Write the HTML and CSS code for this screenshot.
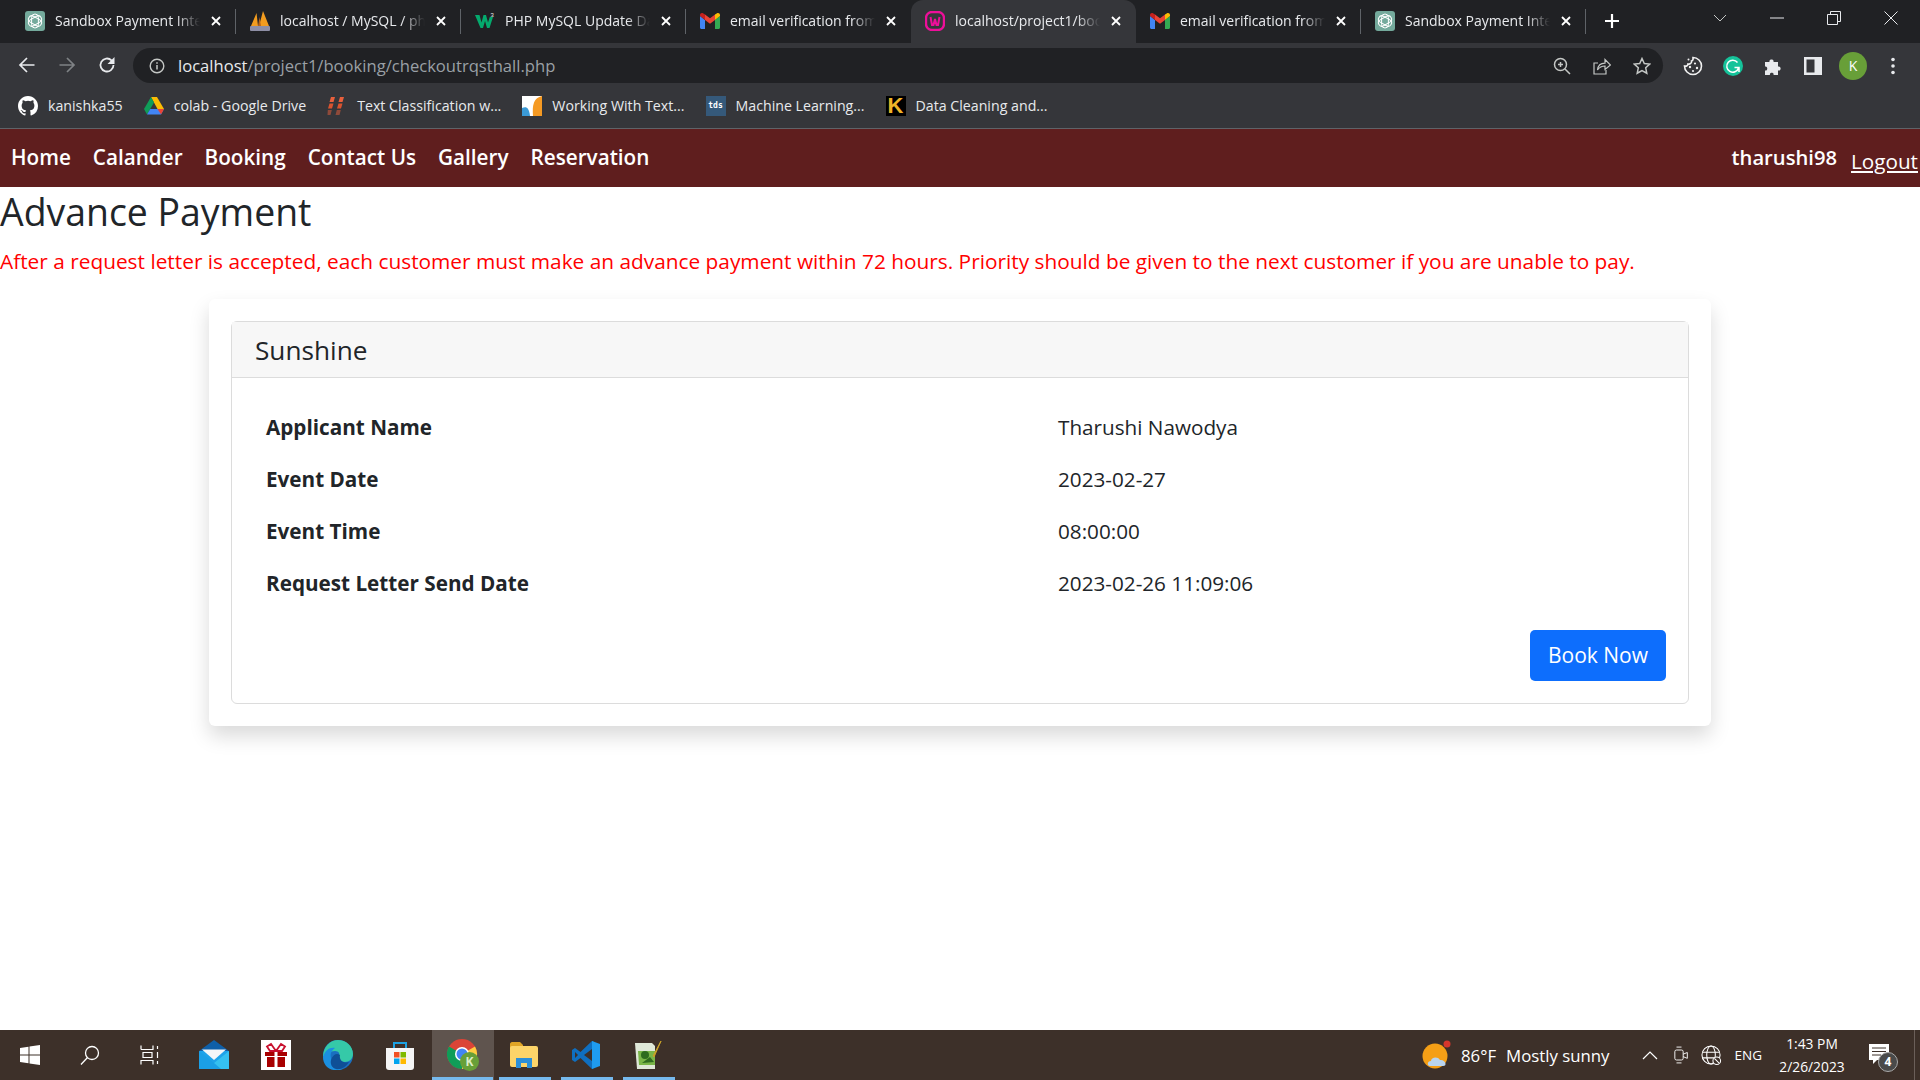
FILE: index.html
```html
<!DOCTYPE html>
<html lang="en">
<head>
  <meta charset="UTF-8">
  <title>Advance Payment</title>
  <link rel="stylesheet" href="styles.css">
</head>
<body>
  <svg class="icon-defs">
    <symbol id="ic-openai" viewBox="0 0 20 20">
      <rect width="20" height="20" rx="3" fill="#74aa9c"/>
      <g fill="none" stroke="#fff" stroke-width="1">
        <rect x="6.6" y="3" width="6.8" height="14" rx="3.4"/>
        <rect x="6.6" y="3" width="6.8" height="14" rx="3.4" transform="rotate(60 10 10)"/>
        <rect x="6.6" y="3" width="6.8" height="14" rx="3.4" transform="rotate(120 10 10)"/>
      </g>
    </symbol>
    <symbol id="ic-gmail" viewBox="0 0 20 16">
      <path d="M0 3v11.500C0 15.300.7 16 1.500 16H5V7z" fill="#4285f4"/>
      <path d="M15 7v9h3.500c.8 0 1.500-.7 1.500-1.500V3z" fill="#34a853"/>
      <path d="M5 7 10 10.800 15 7V1.500L10 5.200 5 1.500z" fill="#ea4335"/>
      <path d="M0 3 5 7V1.500L3 .3C1.600-.5 0 .5 0 2z" fill="#c5221f"/>
      <path d="M20 3 15 7V1.500l2-1.200C18.400-.5 20 .5 20 2z" fill="#fbbc04"/>
    </symbol>
    <symbol id="ic-close" viewBox="0 0 12 12">
      <path d="M2 2l8 8M10 2l-8 8" stroke="#fff" stroke-width="1.800" fill="none"/>
    </symbol>
  </svg>

  <div class="tabstrip">
    <div class="tab">
      <svg class="favicon"><use href="#ic-openai"/></svg>
      <span class="tab-title">Sandbox Payment Intents</span>
      <svg class="tab-close"><use href="#ic-close"/></svg>
    </div>
    <div class="tab">
      <svg class="favicon" viewBox="0 0 20 20">
        <path d="M1 15 6.500 2 8 15zM9 15 13 0l6 15z" fill="#f29c1f"/>
        <path d="M8 15 9.500 6 11 15z" fill="#b9651a"/>
        <rect x="0" y="15" width="20" height="5" rx="1" fill="#8e8fa6"/>
      </svg>
      <span class="tab-title">localhost / MySQL / phpMyAdmin</span>
      <svg class="tab-close"><use href="#ic-close"/></svg>
    </div>
    <div class="tab">
      <svg class="favicon" viewBox="0 0 20 20">
        <path d="M0 4h4.500l2 7.500L8.500 4H11l2 7.500 1.800-5.500H18l-3.500 11H12l-2-7-2 7H5.500z" fill="#04aa6d"/>
        <text x="15.500" y="6" class="fav-sup">3</text>
      </svg>
      <span class="tab-title">PHP MySQL Update Data</span>
      <svg class="tab-close"><use href="#ic-close"/></svg>
    </div>
    <div class="tab">
      <svg class="favicon"><use href="#ic-gmail"/></svg>
      <span class="tab-title">email verification from php</span>
      <svg class="tab-close"><use href="#ic-close"/></svg>
    </div>
    <div class="tab tab-active">
      <svg class="favicon" viewBox="0 0 20 20">
        <rect x="1" y="1" width="18" height="18" rx="6" fill="none" stroke="#ee0f9a" stroke-width="2.400"/>
        <path d="M5.500 6 7 14h1.500L10 8l1.500 6H13l1.500-8" fill="none" stroke="#ee0f9a" stroke-width="2"/>
      </svg>
      <span class="tab-title">localhost/project1/booking</span>
      <svg class="tab-close"><use href="#ic-close"/></svg>
    </div>
    <div class="tab">
      <svg class="favicon"><use href="#ic-gmail"/></svg>
      <span class="tab-title">email verification from php</span>
      <svg class="tab-close"><use href="#ic-close"/></svg>
    </div>
    <div class="tab">
      <svg class="favicon"><use href="#ic-openai"/></svg>
      <span class="tab-title">Sandbox Payment Intents</span>
      <svg class="tab-close"><use href="#ic-close"/></svg>
    </div>
    <svg class="new-tab" viewBox="0 0 16 16"><path d="M8 1v14M1 8h14" stroke="#fff" stroke-width="2.200"/></svg>
    <div class="window-controls">
      <svg class="win-chevron" viewBox="0 0 14 8"><path d="M1 1l6 6 6-6" fill="none" stroke="#c4c7c5" stroke-width="1"/></svg>
      <svg class="win-btn" viewBox="0 0 14 14"><path d="M0 7h14" stroke="#e8eaed" stroke-width="1"/></svg>
      <svg class="win-btn" viewBox="0 0 14 14"><path d="M.5 3.500h10v10H.5zM3.500 3.500v-3h10v10h-3" fill="none" stroke="#e8eaed" stroke-width="1"/></svg>
      <svg class="win-btn" viewBox="0 0 14 14"><path d="M.5.500l13 13M13.500.500l-13 13" stroke="#e8eaed" stroke-width="1"/></svg>
    </div>
  </div>

  <div class="toolbar">
    <svg class="tool-icon" viewBox="0 0 18 18"><path d="M16.500 9H2M9 2 2 9l7 7" fill="none" stroke="#e8eaed" stroke-width="1.700"/></svg>
    <svg class="tool-icon" viewBox="0 0 18 18"><path d="M1.500 9H16M9 2l7 7-7 7" fill="none" stroke="#7f8285" stroke-width="1.700"/></svg>
    <svg class="tool-icon" viewBox="0 0 18 18"><path d="M15.500 9a6.500 6.500 0 1 1-2-4.700L15.500 6.500" fill="none" stroke="#e8eaed" stroke-width="1.800"/><path d="M16.500 1v7h-7z" fill="#e8eaed"/></svg>
    <div class="omnibox">
      <svg class="omni-info" viewBox="0 0 16 16">
        <circle cx="8" cy="8" r="6.800" fill="none" stroke="#c4c7c5" stroke-width="1.400"/>
        <path d="M8 7v4.500M8 4.200v1.500" stroke="#c4c7c5" stroke-width="1.500"/>
      </svg>
      <span class="url"><span class="url-host">localhost</span>/project1/booking/checkoutrqsthall.php</span>
      <div class="omni-actions">
        <svg class="omni-icon" viewBox="0 0 18 18">
          <circle cx="7.500" cy="7.500" r="6" fill="none" stroke="#c4c7c5" stroke-width="1.500"/>
          <path d="M12 12l5 5M7.500 5v5M5 7.500h5" stroke="#c4c7c5" stroke-width="1.500"/>
        </svg>
        <svg class="omni-icon" viewBox="0 0 18 18">
          <path d="M5 6H1v11h12v-4M4.500 13c.5-4.500 3.500-6.800 7.500-6.800V2.500L17.500 8 12 12.500V9c-3 0-5.500 1-7.500 4z" fill="none" stroke="#c4c7c5" stroke-width="1.200"/>
        </svg>
        <svg class="omni-icon" viewBox="0 0 18 18">
          <path d="M9 1.500l2.300 5 5.400.6-4 3.700 1.100 5.400L9 13.500l-4.800 2.700 1.100-5.400-4-3.700 5.400-.6z" fill="none" stroke="#c4c7c5" stroke-width="1.500"/>
        </svg>
      </div>
    </div>
    <div class="ext-icons">
      <svg class="ext-icon" viewBox="0 0 20 20">
        <path d="M10 1.500a8.500 8.500 0 1 1-8.500 8.500c2 .5 3.500-.5 3.500-2 2 .5 4-1 3.500-3 1.200-.3 1.800-1.800 1.500-3.500z" fill="#35363a" stroke="#f1f1f1" stroke-width="1.600"/>
        <circle cx="7" cy="11" r="1.200" fill="#f1f1f1"/><circle cx="12" cy="7.500" r="1.100" fill="#f1f1f1"/>
        <circle cx="14" cy="12" r="1.200" fill="#f1f1f1"/><circle cx="10" cy="15" r="1.100" fill="#f1f1f1"/>
        <circle cx="5.500" cy="3.500" r="1" fill="#f1f1f1"/>
      </svg>
      <svg class="ext-icon" viewBox="0 0 20 20">
        <circle cx="10" cy="10" r="10" fill="#15c39a"/>
        <path d="M14.500 6.500A6 6 0 1 0 15.500 12M11.500 11.500h4.500v4.500" fill="none" stroke="#fff" stroke-width="1.500"/>
      </svg>
      <svg class="ext-icon" viewBox="0 0 20 20">
        <path d="M2 6h4.500c-1-3.500 5-3.500 4 0H15v4.500c3.500-1 3.500 5 0 4V19h-4.500c1-3-4.500-3-3.500 0H2v-4.500c3 1 3-5 0-4z" fill="#e8eaed"/>
      </svg>
      <svg class="ext-icon" viewBox="0 0 20 20">
        <rect x="1" y="1" width="18" height="18" fill="#e8eaed"/><rect x="3.500" y="3.500" width="8" height="13" fill="#35363a"/>
      </svg>
      <span class="avatar">K</span>
      <svg class="ext-icon" viewBox="0 0 20 20">
        <circle cx="10" cy="3.500" r="1.800" fill="#e8eaed"/><circle cx="10" cy="10" r="1.800" fill="#e8eaed"/><circle cx="10" cy="16.500" r="1.800" fill="#e8eaed"/>
      </svg>
    </div>
  </div>

  <div class="bookmarks">
    <a class="bookmark">
      <svg class="bm-icon" viewBox="0 0 16 16">
        <path fill="#fff" d="M8 0C3.580 0 0 3.580 0 8c0 3.540 2.290 6.530 5.470 7.590.4.070.55-.17.55-.38v-1.340c-2.230.48-2.690-1.070-2.690-1.070-.36-.92-.89-1.170-.89-1.170-.73-.5.050-.49.050-.49.800.060 1.220.82 1.220.82.710 1.220 1.870.87 2.330.66.070-.52.280-.87.510-1.070-1.780-.2-3.640-.89-3.640-3.950 0-.87.310-1.590.82-2.150-.08-.2-.36-1.020.080-2.120 0 0 .67-.21 2.200.82a7.600 7.600 0 0 1 4 0c1.530-1.040 2.200-.82 2.200-.82.440 1.100.16 1.920.08 2.120.51.560.82 1.270.82 2.150 0 3.070-1.870 3.750-3.650 3.950.29.250.54.730.54 1.480v2.200c0 .21.150.46.550.38A8.010 8.010 0 0 0 16 8c0-4.420-3.580-8-8-8z"/>
      </svg>
      kanishka55
    </a>
    <a class="bookmark">
      <svg class="bm-icon" viewBox="0 0 20 18">
        <path d="M7 0h6l7 12h-6.500z" fill="#fbbc04"/>
        <path d="M7 0 0 12l3 5.500L10 5.500z" fill="#0f9d58"/>
        <path d="M3 17.500h14l3-5.500H6.200z" fill="#4285f4"/>
        <path d="M13.500 12H20l-3 5.500z" fill="#ea4335"/>
      </svg>
      colab - Google Drive
    </a>
    <a class="bookmark">
      <svg class="bm-icon" viewBox="0 0 20 20">
        <path d="M4 1h4L6.500 6h-4zM13 1h4l-1.500 5h-4z" fill="#e8603c"/>
        <path d="M2.500 7.500h4L5 12.500H1zM11.500 7.500h4l-1.500 5h-4z" fill="#d9532f"/>
        <path d="M.8 14h4l-1.300 5h-3zM9.800 14h4l-1.300 5h-4z" fill="#8f4a3a"/>
      </svg>
      Text Classification w...
    </a>
    <a class="bookmark">
      <svg class="bm-icon" viewBox="0 0 20 20">
        <rect width="20" height="20" fill="#fff"/>
        <path d="M0 12c4-2 7-1 8 8H0z" fill="#3b9ad6"/>
        <path d="M20 0c-8 2-10 8-9 20h9z" fill="#f59a23"/>
      </svg>
      Working With Text...
    </a>
    <a class="bookmark">
      <span class="bm-tds">tds</span>
      Machine Learning...
    </a>
    <a class="bookmark">
      <span class="bm-k">K</span>
      Data Cleaning and...
    </a>
  </div>

  <nav class="navbar">
    <div class="nav-links">
      <a>Home</a>
      <a>Calander</a>
      <a>Booking</a>
      <a>Contact Us</a>
      <a>Gallery</a>
      <a>Reservation</a>
    </div>
    <div class="nav-user">
      <span class="nav-username">tharushi98</span>
      <a class="nav-logout">Logout</a>
    </div>
  </nav>

  <main class="page">
    <h2 class="page-title">Advance Payment</h2>
    <p class="page-note">After a request letter is accepted, each customer must make an advance payment within 72 hours. Priority should be given to the next customer if you are unable to pay.</p>

    <div class="outer-card">
      <div class="card">
        <div class="card-header">Sunshine</div>
        <div class="card-body">
          <div class="detail-row">
            <span class="detail-label">Applicant Name</span>
            <span>Tharushi Nawodya</span>
          </div>
          <div class="detail-row">
            <span class="detail-label">Event Date</span>
            <span>2023-02-27</span>
          </div>
          <div class="detail-row">
            <span class="detail-label">Event Time</span>
            <span>08:00:00</span>
          </div>
          <div class="detail-row">
            <span class="detail-label">Request Letter Send Date</span>
            <span>2023-02-26 11:09:06</span>
          </div>
          <div class="card-actions">
            <a class="btn-book">Book Now</a>
          </div>
        </div>
      </div>
    </div>
  </main>

  <footer class="taskbar">
    <div class="task-left">
      <span class="task-cell task-cell-sys">
        <svg class="task-sys" viewBox="0 0 20 20"><path d="M0 3l8.500-1.300V9.500H0zM9.500 1.500 20 0v9.500H9.500zM0 10.500h8.500v7.800L0 17zM9.500 10.500H20V20L9.500 18.500z" fill="#fff"/></svg>
      </span>
      <span class="task-cell task-cell-sys">
        <svg class="task-sys" viewBox="0 0 20 20"><circle cx="12" cy="8" r="6.500" fill="none" stroke="#fff" stroke-width="1.300"/><path d="M7.500 12.500 1 19.500" stroke="#fff" stroke-width="1.300"/></svg>
      </span>
      <span class="task-cell task-cell-sys task-cell-last">
        <svg class="task-sys" viewBox="0 0 20 20"><path d="M1 4.500h12v-4M1 .5v4M1 19.500v-4h12v4M3 7.500h9v5H3zM17.500 1v3M17.500 7v6M17.500 16v3" fill="none" stroke="#fff" stroke-width="1.200"/></svg>
      </span>
      <span class="task-cell">
        <svg class="task-app" viewBox="0 0 30 30">
          <path d="M15 0 30 11v4H0v-4z" fill="#0f5fa8"/>
          <rect y="11" width="30" height="18" rx="1" fill="#1fa3ea"/>
          <path d="M3 9.500h24L15 20z" fill="#f4f6f8"/>
          <path d="M0 11 15 23 30 11v17c0 .6-.4 1-1 1H1c-.6 0-1-.4-1-1z" fill="#1b9fe6"/>
          <path d="M15 23 30 11v17c0 .6-.4 1-1 1H22z" fill="#35c0f0"/>
        </svg>
      </span>
      <span class="task-cell">
        <svg class="task-app" viewBox="0 0 30 30">
          <rect width="30" height="30" fill="#fff"/>
          <rect x="4" y="12" width="22" height="4" fill="#a80000"/>
          <rect x="6" y="17" width="18" height="10" fill="#a80000"/>
          <rect x="13.500" y="12" width="3" height="15" fill="#fff"/>
          <path d="M15 11 10 4 6 6.500 9 11zM15 11l5-7 4 2.500-3 4.500z" fill="none" stroke="#c8102e" stroke-width="1.800"/>
        </svg>
      </span>
      <span class="task-cell">
        <svg class="task-app" viewBox="0 0 30 30">
          <circle cx="15" cy="15" r="15" fill="#1a6fc0"/>
          <path d="M15 0c8 0 15 6 15 14 0 5-4 8-8 8-5 0-7-3-6-6 1-2 0-5-4-5C7 11 2 14 0 17 0 7 7 0 15 0z" fill="#35c9a8"/>
          <path d="M0 17C2 10 7 7 12 8c-4 3-5 6-4 10 1 6 6 10 12 11C9 33 0 27 0 17z" fill="#1b8fe0"/>
          <path d="M8 20c2-6 6-7 9-5-1 4 2 9 9 7-3 5-8 8-13 7-4-1-6-5-5-9z" fill="#0f4f96"/>
        </svg>
      </span>
      <span class="task-cell">
        <svg class="task-app" viewBox="0 0 30 30">
          <path d="M1 8h28v19c0 2-1 3-3 3H4c-2 0-3-1-3-3z" fill="#f5f5f5"/>
          <path d="M9 8V3h12v5" fill="none" stroke="#1ba1e2" stroke-width="2"/>
          <rect x="9" y="12" width="5.500" height="5.500" fill="#f25022"/><rect x="15.500" y="12" width="5.500" height="5.500" fill="#7fba00"/>
          <rect x="9" y="18.500" width="5.500" height="5.500" fill="#00a4ef"/><rect x="15.500" y="18.500" width="5.500" height="5.500" fill="#ffb900"/>
        </svg>
      </span>
      <span class="task-cell task-running task-active">
        <svg class="task-app task-chrome" viewBox="0 0 32 32">
          <circle cx="15" cy="15" r="15" fill="#db4437"/>
          <path d="M15 15 2 7.500A15 15 0 0 0 15 30z" fill="#0f9d58"/>
          <path d="M15 15 28 7.500A15 15 0 0 1 15 30z" fill="#ffcd40"/>
          <circle cx="15" cy="15" r="7" fill="#fff"/><circle cx="15" cy="15" r="5.500" fill="#4285f4"/>
          <circle cx="22.500" cy="22.500" r="9.500" fill="#689f38"/>
          <text x="22.500" y="27" class="task-badge-k">K</text>
        </svg>
      </span>
      <span class="task-cell task-running">
        <svg class="task-app" viewBox="0 0 30 30">
          <path d="M1 4c0-1 1-2 2-2h8l3 3v6H1z" fill="#e0a526"/>
          <rect x="1" y="6" width="28" height="21" rx="2" fill="#fcd469"/>
          <path d="M7 28V18h16v10h-5v-5h-6v5z" fill="#2b8fd8"/>
        </svg>
      </span>
      <span class="task-cell task-running">
        <svg class="task-app" viewBox="0 0 30 30">
          <path d="M21 1 9.500 12 4 8 1 10v10l3 2 5.500-4L21 29l2-1V2z" fill="#0f6fc0"/>
          <path d="M21 1l8 3v22l-8 3z" fill="#1f9cf0"/>
          <path d="M21 9v12l-8-6z" fill="#3d3029"/>
          <path d="M4 12v6l3-3z" fill="#3d3029"/>
        </svg>
      </span>
      <span class="task-cell task-running">
        <svg class="task-app" viewBox="0 0 30 30">
          <path d="M2 3h17l3 3v23H4z" fill="#dfe8d8"/>
          <path d="M5 11h17v14H6z" fill="#7ab648"/>
          <circle cx="12" cy="15" r="4" fill="#2e6b1f"/><path d="M9 23l8-6 4 5z" fill="#2e6b1f"/>
          <path d="M28 1 21 17l-1-1z" fill="#c9a227" stroke="#c9a227"/>
        </svg>
      </span>
    </div>
    <div class="task-right">
      <svg class="weather-icon" viewBox="0 0 30 30">
        <circle cx="13" cy="16" r="12.500" fill="#f59f16"/>
        <circle cx="25" cy="4" r="3.500" fill="#d6362c"/>
        <path d="M8 26c-3 0-3-5 1-5 0-4 7-5 9-1 5-1 8 6 3 6z" fill="#b9d4ee"/>
      </svg>
      <span class="weather-text">86°F</span>
      <span class="weather-text weather-desc">Mostly sunny</span>
      <svg class="tray-chevron" viewBox="0 0 16 9"><path d="M1 8l7-7 7 7" fill="none" stroke="#fff" stroke-width="1.200"/></svg>
      <svg class="tray-icon" viewBox="0 0 18 22">
        <rect x="1" y="5" width="10" height="12" rx="2" fill="none" stroke="#fff" stroke-width="1.100"/>
        <path d="M11 10l5-2v7l-5-2M3 1.500h6M3 20.500h6" fill="none" stroke="#fff" stroke-width="1.100"/>
      </svg>
      <svg class="tray-globe" viewBox="0 0 22 22">
        <g fill="none" stroke="#fff" stroke-width="1.100">
          <circle cx="10.500" cy="10.500" r="9.500"/><ellipse cx="10.500" cy="10.500" rx="4.500" ry="9.500"/>
          <path d="M1.500 7.500h18M1.500 13.500h18"/>
          <circle cx="16.500" cy="16.500" r="4" fill="#3d3029"/><path d="M14 14l5 5"/>
        </g>
      </svg>
      <span class="tray-lang">ENG</span>
      <div class="tray-clock">
        <span>1:43 PM</span>
        <span>2/26/2023</span>
      </div>
      <div class="tray-notify">
        <svg class="notify-icon" viewBox="0 0 20 20">
          <path d="M0 0h20v16H8l-4 4v-4H0z" fill="#fff"/>
          <path d="M3 4h14M3 7.500h14M3 11h9" stroke="#3d3029" stroke-width="1"/>
        </svg>
        <span class="notify-badge">4</span>
      </div>
      <span class="show-desktop"></span>
    </div>
  </footer>
</body>
</html>
```

FILE: styles.css
```css
/* General */
body {
  margin: 0;
  height: 100vh;
  overflow: hidden;
  display: flex;
  flex-direction: column;
  background: #fff;
  color: #212529;
  font-family: "Open Sans", "Noto Sans", sans-serif;
  font-size: 20.7px;
}

.icon-defs {
  display: none;
}

/* Browser tabs */
.tabstrip {
  height: 43px;
  flex: none;
  display: flex;
  align-items: stretch;
  padding-left: 11px;
  background: #202124;
  font-size: 14px;
  color: #e8eaed;
}

.tab {
  width: 225px;
  display: flex;
  align-items: center;
  gap: 10px;
  padding: 0 14px 2px 14px;
  box-sizing: border-box;
  position: relative;
}

.tab::after {
  content: "";
  position: absolute;
  right: 0;
  top: 9px;
  height: 25px;
  width: 1px;
  background: #5f6368;
}

.tab-active {
  background: #35363a;
  border-radius: 12px 12px 0 0;
}

.tab-active::after {
  display: none;
}

.tab:nth-child(4)::after {
  display: none;
}

.favicon {
  width: 20px;
  height: 20px;
  flex: none;
}

.fav-sup {
  font-family: "Liberation Sans", sans-serif;
  font-size: 6px;
  fill: #e8eaed;
}

.tab-title {
  flex: 1;
  white-space: nowrap;
  overflow: hidden;
  -webkit-mask-image: linear-gradient(90deg, #000 84%, transparent);
  mask-image: linear-gradient(90deg, #000 84%, transparent);
}

.tab-close {
  width: 12px;
  height: 12px;
  flex: none;
}

.new-tab {
  width: 16px;
  height: 16px;
  margin: 13px 0 0 18px;
}

.window-controls {
  margin-left: auto;
  display: flex;
  align-items: center;
  padding: 0 22px 7px 0;
  gap: 43px;
}

.win-chevron {
  width: 14px;
  height: 8px;
}

.win-btn {
  width: 14px;
  height: 14px;
}

/* Toolbar */
.toolbar {
  height: 40px;
  flex: none;
  display: flex;
  align-items: flex-start;
  padding: 5px 0 0 18px;
  box-sizing: border-box;
  gap: 22px;
  background: #35363a;
}

.tool-icon {
  width: 18px;
  height: 18px;
  flex: none;
  margin-top: 8px;
}

.omnibox {
  width: 1530px;
  height: 35px;
  margin-left: -5px;
  display: flex;
  align-items: center;
  padding: 0 12px 0 16px;
  box-sizing: border-box;
  border-radius: 18px;
  background: #202124;
  font-size: 16.6px;
  color: #9aa0a6;
}

.omni-info {
  width: 16px;
  height: 16px;
  margin-right: 13px;
}

.url-host {
  color: #e8eaed;
}

.omni-actions {
  margin-left: auto;
  display: flex;
  gap: 22px;
}

.omni-icon {
  width: 18px;
  height: 18px;
}

.ext-icons {
  display: flex;
  align-items: center;
  height: 35px;
  gap: 20px;
  margin-left: -2px;
}

.ext-icon {
  width: 20px;
  height: 20px;
}

.avatar {
  width: 28px;
  height: 28px;
  margin: 0 -4px;
  border-radius: 50%;
  background: #689f38;
  color: #fff;
  font-size: 14px;
  line-height: 28px;
  text-align: center;
}

/* Bookmarks */
.bookmarks {
  height: 46px;
  flex: none;
  display: flex;
  align-items: center;
  gap: 21px;
  padding-left: 18px;
  box-sizing: border-box;
  border-bottom: 1px solid #5f6368;
  background: #35363a;
  font-size: 14.2px;
  color: #e8eaed;
}

.bookmark {
  display: flex;
  align-items: center;
  gap: 10px;
}

.bm-icon {
  width: 20px;
  height: 20px;
  flex: none;
}

.bm-tds {
  width: 20px;
  height: 20px;
  background: #35597a;
  color: #fff;
  font-family: "DejaVu Sans Mono", monospace;
  font-size: 8px;
  font-weight: bold;
  line-height: 20px;
  text-align: center;
}

.bm-k {
  width: 20px;
  height: 20px;
  background: #000;
  color: #f0b428;
  font-family: "Liberation Sans", sans-serif;
  font-size: 22px;
  font-weight: bold;
  line-height: 20px;
  text-align: center;
}

/* Navbar */
.navbar {
  height: 58px;
  flex: none;
  display: flex;
  justify-content: space-between;
  align-items: center;
  padding: 0 0 2px 11px;
  box-sizing: border-box;
  background: #5f1e1e;
  color: #fff;
  font-size: 20.7px;
}

.nav-links {
  display: flex;
  gap: 22px;
  font-weight: 600;
}

.nav-user {
  display: flex;
  align-items: center;
  gap: 14px;
  margin-right: 2px;
}

.nav-username {
  font-size: 20.2px;
  font-weight: 600;
}

.nav-logout {
  padding-top: 8px;
  text-decoration: underline;
}

/* Page */
.page {
  flex: 1;
}

.page-title {
  margin: 0 0 9px;
  padding-top: 1px;
  font-size: 37.4px;
  font-weight: 500;
  line-height: 48px;
}

.page-note {
  margin: 0 0 24px;
  color: #ff0000;
  font-size: 20.83px;
  line-height: 30px;
  padding-top: 1px;
}

.outer-card {
  width: 1502px;
  margin: -1px auto 0;
  padding: 22px;
  box-sizing: border-box;
  border-radius: 6px;
  background: #fff;
  box-shadow: 0 10px 20px rgba(0, 0, 0, 0.15);
}

.card {
  border: 1px solid #dcdcdc;
  border-radius: 6px;
}

.card-header {
  height: 56px;
  padding: 2px 23px 0;
  box-sizing: border-box;
  border-bottom: 1px solid #dcdcdc;
  background: #f7f7f7;
  font-size: 26.2px;
  font-weight: 500;
  line-height: 52px;
}

.card-body {
  padding: 23px 22px 22px;
}

.detail-row {
  display: grid;
  grid-template-columns: 792px 1fr;
  height: 52px;
  padding-left: 12px;
  align-items: center;
}

.detail-label {
  font-weight: 700;
}

.card-actions {
  display: flex;
  justify-content: flex-end;
  margin-top: 21px;
}

.btn-book {
  padding: 0 18px;
  border-radius: 5px;
  background: #0d6efd;
  color: #fff;
  font-size: 21px;
  line-height: 51px;
}

/* Taskbar */
.taskbar {
  height: 50px;
  flex: none;
  display: flex;
  justify-content: space-between;
  background: #3d3029;
  color: #fff;
}

.task-left {
  display: flex;
}

.task-cell {
  width: 62px;
  height: 50px;
  display: flex;
  align-items: center;
  justify-content: center;
  box-sizing: border-box;
  position: relative;
}

.task-cell-sys {
  width: 60px;
}

.task-cell-last {
  margin-right: 4px;
}

.task-running::after {
  content: "";
  position: absolute;
  left: 5px;
  right: 5px;
  bottom: 0;
  height: 3px;
  background: #76b9ed;
}

.task-active {
  background: #5f544e;
}

.task-active::after {
  left: 0;
  right: 1px;
}

.task-sys {
  width: 20px;
  height: 20px;
}

.task-app {
  width: 30px;
  height: 30px;
  margin-right: 2px;
}

.task-chrome {
  width: 32px;
  height: 32px;
  margin-right: 0;
}

.task-badge-k {
  font-family: "Open Sans", sans-serif;
  font-size: 12px;
  font-weight: bold;
  fill: #dcedc8;
  text-anchor: middle;
}

.task-right {
  display: flex;
  align-items: center;
  font-size: 16px;
}

.weather-icon {
  width: 30px;
  height: 30px;
  margin-right: 9px;
}

.weather-text {
  font-size: 16.8px;
}

.weather-desc {
  margin-left: 10px;
}

.tray-chevron {
  width: 16px;
  height: 9px;
  margin-left: 32px;
}

.tray-icon {
  width: 15px;
  height: 20px;
  margin-left: 16px;
}

.tray-globe {
  width: 21px;
  height: 21px;
  margin-left: 12px;
}

.tray-lang {
  margin-left: 13px;
  font-size: 13.5px;
}

.tray-clock {
  width: 84px;
  margin-left: 8px;
  display: flex;
  flex-direction: column;
  align-items: center;
  gap: 4px;
  font-size: 13.8px;
}

.tray-notify {
  width: 33px;
  height: 32px;
  margin-left: 14px;
  position: relative;
}

.notify-icon {
  width: 20px;
  height: 20px;
  position: absolute;
  left: 1px;
  top: 5px;
}

.notify-badge {
  position: absolute;
  left: 10px;
  top: 13px;
  width: 18px;
  height: 18px;
  border: 1px solid #aaa;
  border-radius: 50%;
  background: #4a4a4a;
  font-size: 12px;
  font-weight: bold;
  line-height: 18px;
  text-align: center;
}

.show-desktop {
  width: 1px;
  height: 50px;
  margin-left: 13px;
  margin-right: 5px;
  background: #6b5f59;
}
```
